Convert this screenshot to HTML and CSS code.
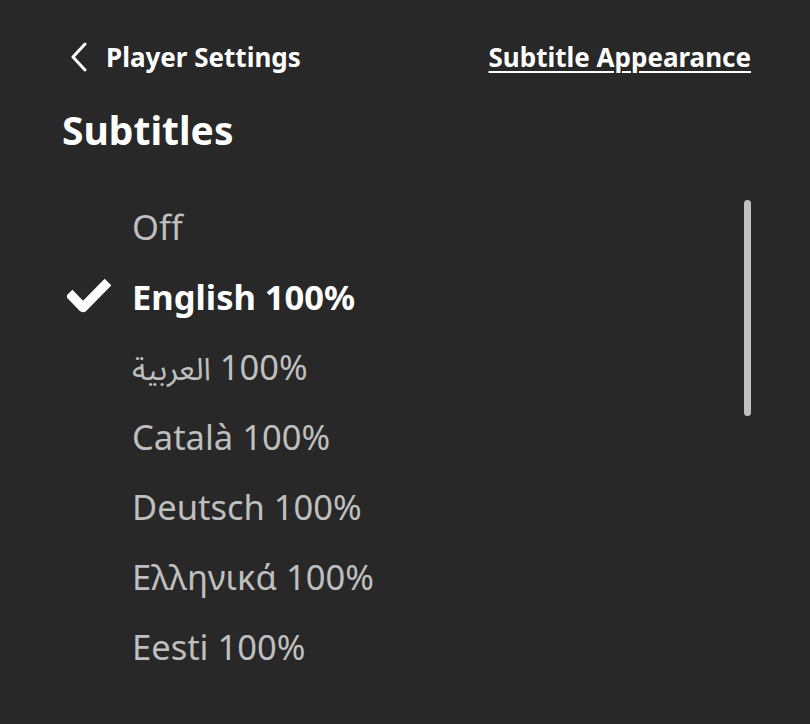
FILE: index.html
```html
<!DOCTYPE html>
<html lang="en">
<head>
<meta charset="utf-8">
<title>Subtitles</title>
<link rel="stylesheet" href="styles.css">
</head>
<body>
<div class="panel">
  <header class="topbar">
    <a class="back" href="#">
      <svg class="chev" width="20" height="30" viewBox="0 0 20 30"><path d="M16 2 L4 15 L16 28" fill="none" stroke="#fff" stroke-width="3" stroke-linecap="round" stroke-linejoin="round"/></svg>
      <span>Player Settings</span>
    </a>
    <a class="appearance" href="#">Subtitle Appearance</a>
  </header>
  <h1 class="title">Subtitles</h1>
  <div class="listwrap">
    <ul class="list">
      <li class="item"><span class="mark"></span><span class="label">Off</span></li>
      <li class="item selected"><span class="mark"><svg width="44" height="36" viewBox="0 0 44 36"><path d="M2 15 L16 29.5 L41 4" fill="none" stroke="#fff" stroke-width="9.5" stroke-linecap="butt" stroke-linejoin="round"/></svg></span><span class="label">English 100%</span></li>
      <li class="item"><span class="mark"></span><span class="label"><span class="ar" dir="rtl" lang="ar">العربية</span> 100%</span></li>
      <li class="item"><span class="mark"></span><span class="label">Català 100%</span></li>
      <li class="item"><span class="mark"></span><span class="label">Deutsch 100%</span></li>
      <li class="item"><span class="mark"></span><span class="label">Ελληνικά 100%</span></li>
      <li class="item"><span class="mark"></span><span class="label">Eesti 100%</span></li>
    </ul>
    <div class="scrollbar"></div>
  </div>
</div>
</body>
</html>
```
FILE: styles.css
```css
html, body {
  margin: 0;
  padding: 0;
  background: #282828;
  height: 100%;
}
body {
  font-family: "Noto Sans", "Open Sans", sans-serif;
  color: #fff;
}
.panel {
  padding: 36px 59px 0 62px;
}
.topbar {
  display: flex;
  justify-content: space-between;
  align-items: center;
  height: 42px;
}
.back {
  display: flex;
  align-items: center;
  gap: 17px;
  color: #fff;
  text-decoration: none;
  font-weight: 700;
  font-size: 26px;
  padding-left: 7px;
}
.appearance {
  color: #fff;
  font-weight: 700;
  font-size: 26px;
  text-decoration: underline;
  text-underline-offset: 4px;
  text-decoration-thickness: 2px;
}
.title {
  margin: 25px 0 0 0;
  font-size: 39px;
  font-weight: 700;
  line-height: 54px;
}
.listwrap {
  display: flex;
  justify-content: space-between;
  margin-top: 34px;
}
.list {
  list-style: none;
  margin: 0;
  padding: 0;
}
.item {
  display: flex;
  align-items: center;
  height: 70px;
  font-size: 34.5px;
  color: #bfbfbf;
}
.ar {
  font-family: "Noto Sans Arabic UI", "Noto Sans Arabic", "DejaVu Sans", sans-serif;
  font-size: 31px;
}
.mark {
  width: 70px;
  display: flex;
  align-items: center;
  padding-left: 5px;
  box-sizing: border-box;
}
.selected {
  color: #fff;
  font-weight: 700;
}
.scrollbar {
  width: 7px;
  height: 216px;
  background: #c0c0c0;
  border-radius: 4px;
  margin-top: 9px;
}
```
